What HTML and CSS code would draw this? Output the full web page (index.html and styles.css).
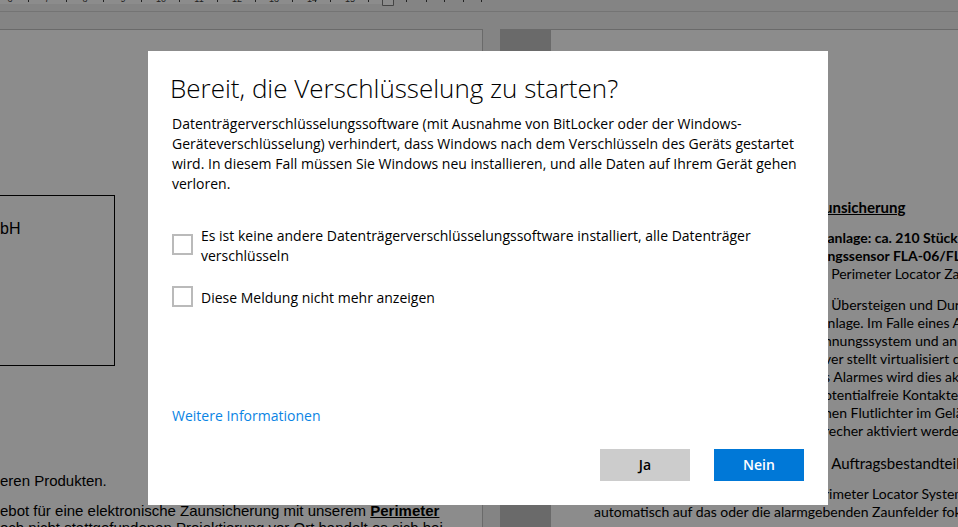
FILE: index.html
```html
<!DOCTYPE html>
<html lang="de">
<head>
<meta charset="utf-8">
<title>Verschlüsselung starten</title>
<link rel="stylesheet" href="styles.css">
</head>
<body>
<div class="workspace">
  <header class="ruler">
    <svg width="500" height="7" viewBox="0 0 500 7" aria-hidden="true">
      <rect class="ruler-page" width="388" height="4"/>
      <g class="ruler-numbers">
        <text x="10" y="2">6</text><text x="47" y="2">7</text><text x="85" y="2">8</text><text x="123" y="2">9</text><text x="161" y="2">10</text><text x="199" y="2">11</text><text x="237" y="2">12</text><text x="274" y="2">13</text><text x="312" y="2">14</text><text x="350" y="2">15</text>
      </g>
      <path class="ruler-ticks" d="M28.5 0v2M66.5 0v2M103.5 0v2M141.5 0v2M179.5 0v2M217.5 0v2M255.5 0v2M292.5 0v2M315.5 0v2M330.5 0v2M368.5 0v2M406.5 0v2M426.5 0v2M444.5 0v2M463.5 0v2M481.5 0v2"/>
      <path class="ruler-marker" d="M382.5 0v5.5h11V0"/>
    </svg>
  </header>
  <main class="pages">
    <article class="page page-left">
      <div class="address">bH</div>
      <p class="closing">eren Produkten.</p>
      <p class="offer">ebot für eine elektronische Zaunsicherung mit unserem <b><u>Perimeter</u></b><br>och nicht stattgefundenen Projektierung vor Ort handelt es sich bei</p>
    </article>
    <article class="page page-right">
      <div class="margin-strip"></div>
      <div class="column">
        <h2><u>unsicherung</u></h2>
        <p><b> anlage: ca. 210 Stück)</b>
<b> ngssensor FLA-06/FLC</b>
  Perimeter Locator Zau</p>
        <p>  Übersteigen und Durc
 nlage. Im Falle eines A
nnungssystem und an
ver stellt virtualisiert d
s Alarmes wird dies akt
otentialfreie Kontakte,
nen Flutlichter im Gelän
recher aktiviert werden</p>
        <p class="lead">  Auftragsbestandteil</p>
        <p>rimeter Locator System</p>
        <p class="full">automatisch auf das oder die alarmgebenden Zaunfelder fokus</p>
      </div>
    </article>
  </main>
</div>
<div class="overlay">
  <form class="dialog" role="dialog" aria-labelledby="title">
    <h1 id="title">Bereit, die Verschlüsselung zu starten?</h1>
    <p class="message">Datenträgerverschlüsselungssoftware (mit Ausnahme von BitLocker oder der Windows-<br>Geräteverschlüsselung) verhindert, dass Windows nach dem Verschlüsseln des Geräts gestartet<br>wird. In diesem Fall müssen Sie Windows neu installieren, und alle Daten auf Ihrem Gerät gehen<br>verloren.</p>
    <div class="options">
      <div class="option">
        <input type="checkbox" id="encrypt-all">
        <label for="encrypt-all">Es ist keine andere Datenträgerverschlüsselungssoftware installiert, alle Datenträger<br>verschlüsseln</label>
      </div>
      <div class="option">
        <input type="checkbox" id="hide-message">
        <label for="hide-message">Diese Meldung nicht mehr anzeigen</label>
      </div>
    </div>
    <a class="more" href="#">Weitere Informationen</a>
    <div class="actions">
      <button type="button">Ja</button>
      <button type="button" class="primary">Nein</button>
    </div>
  </form>
</div>
</body>
</html>
```
FILE: styles.css
```css
* { box-sizing: border-box; }
body { margin: 0; color: #000; background: #848484; }
h1, h2, p { margin: 0; }

.workspace { height: 100vh; overflow: hidden; display: flex; flex-direction: column; }
.ruler { flex: none; height: 12px; border-bottom: 1px solid #747474; }
.ruler svg { display: block; }
.ruler-page { fill: #8c8c8c; }
.ruler-numbers { font: 9px "Liberation Sans", sans-serif; text-anchor: middle; fill: #222; }
.ruler-ticks { stroke: #222; }
.ruler-marker { fill: #8c8c8c; stroke: #444; }

.pages { flex: 1; min-height: 0; margin-top: 17px; display: grid; grid-template-columns: 483fr 458fr; gap: 17px; }
.page { min-width: 0; overflow: hidden; background: #8c8c8c; border-top: 1px solid #6a6a6a; white-space: nowrap; }
.page-left { border-right: 1px solid #6a6a6a; padding-top: 165px; font: 15px/17px "Liberation Sans", sans-serif; }
.address { width: 115px; height: 171px; padding-top: 24px; border: 1px solid #000; border-left: 0; font-size: 16px; }
.closing { margin-top: 106px; }
.offer { margin-top: 13px; }

.page-right { display: flex; }
.margin-strip { flex: none; width: 51px; background: #6a6a6a; }
.column { padding: 168px 0 0 273px; display: flex; flex-direction: column; font: 14px/18px Lato, sans-serif; white-space: pre; }
.column h2 { font-size: 15px; line-height: 18px; }
.column p { margin-top: 13px; }
.column .lead { margin-top: 14px; font-size: 15px; }
.column .full { margin: 0 0 0 -230px; }

.overlay { position: fixed; inset: 0; display: flex; justify-content: center; align-items: flex-start; padding: 51px 0 0 18px; }
.dialog { width: 680px; max-width: 100%; padding: 20px 24px 24px; background: #fff; font: 14px/20px "Open Sans", sans-serif; display: flex; flex-direction: column; white-space: nowrap; }
h1 { margin-left: -2px; font-size: 26px; line-height: 34px; font-weight: 300; }
.message { margin-top: 9px; }
.options { margin-top: 32px; display: grid; gap: 20px; }
.option { display: flex; align-items: center; gap: 8px; }
.option input { appearance: none; flex: none; width: 21px; height: 21px; margin: 0 0 3px; border: 2px solid #bababa; background: #fff; }
.more { align-self: flex-start; margin-top: 96px; color: #0a84e4; text-decoration: none; }
.actions { margin-top: 23px; display: flex; justify-content: flex-end; gap: 24px; }
button { width: 90px; height: 32px; padding: 0; border: 0; background: #ccc; color: #000; font: 600 14px/20px "Open Sans", sans-serif; }
.primary { background: #0078d7; color: #fff; }
```
